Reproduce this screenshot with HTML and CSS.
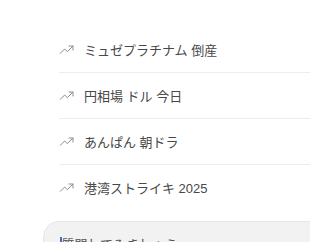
FILE: index.html
```html
<!DOCTYPE html>
<html lang="ja">
<head>
    <meta charset="UTF-8">
    <meta name="viewport" content="width=device-width, initial-scale=1.0">
    <title>トレンド</title>
    <link rel="stylesheet" href="styles.css">
</head>
<body>
    <div class="page">
        <ul class="trends">
            <li class="trend">
                <svg class="icon" viewBox="0 0 24 24"><path d="M2 17l6.5-6.5 4 4L21 6M15 6h6v6"/></svg>
                <span>ミュゼプラチナム 倒産</span>
            </li>
            <li class="trend">
                <svg class="icon" viewBox="0 0 24 24"><path d="M2 17l6.5-6.5 4 4L21 6M15 6h6v6"/></svg>
                <span>円相場 ドル 今日</span>
            </li>
            <li class="trend">
                <svg class="icon" viewBox="0 0 24 24"><path d="M2 17l6.5-6.5 4 4L21 6M15 6h6v6"/></svg>
                <span>あんぱん 朝ドラ</span>
            </li>
            <li class="trend">
                <svg class="icon" viewBox="0 0 24 24"><path d="M2 17l6.5-6.5 4 4L21 6M15 6h6v6"/></svg>
                <span>港湾ストライキ 2025</span>
            </li>
        </ul>
        <div class="compose">
            <span class="caret"></span>
            <span class="placeholder">質問してみましょう</span>
        </div>
    </div>
</body>
</html>
```

FILE: styles.css
```css
html, body{
    margin: 0;
    padding: 0;
    background: #fff;
    overflow: hidden;
}
.page{
    width: 310px;
    height: 242px;
    padding-top: 27px;
    box-sizing: border-box;
    font-family: "Liberation Sans", "Noto Sans CJK JP", sans-serif;
}
.trends{
    list-style: none;
    margin: 0 0 0 59px;
    padding: 0;
}
.trend{
    display: flex;
    align-items: center;
    gap: 9px;
    height: 45px;
    border-bottom: 1px solid #ededed;
    font-size: 13px;
    color: #484848;
}
.trend:last-child{
    border-bottom: none;
}
.icon{
    width: 16px;
    height: 16px;
    fill: none;
    stroke: #8c8c8c;
    stroke-width: 1.5;
    stroke-linecap: round;
    stroke-linejoin: round;
}
.compose{
    display: flex;
    align-items: flex-start;
    margin: 11px 0 0 43px;
    width: 320px;
    height: 60px;
    padding: 15px 0 0 16px;
    box-sizing: border-box;
    background: #f2f2f2;
    border: 1px solid #e6e6e6;
    border-radius: 16px;
}
.caret{
    width: 1.5px;
    height: 16px;
    background: #3a6fd8;
}
.placeholder{
    font-size: 13px;
    color: #555;
    line-height: 16px;
}
```
